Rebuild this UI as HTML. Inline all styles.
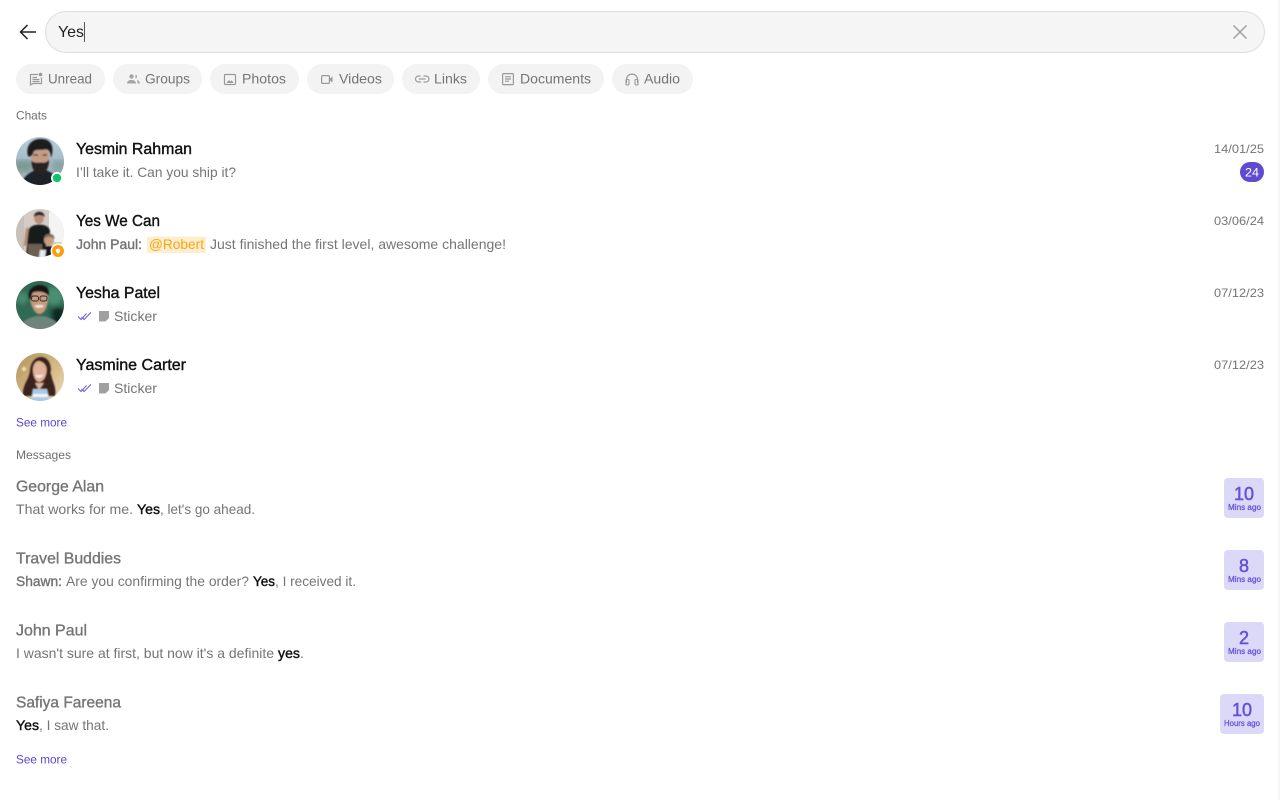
<!DOCTYPE html>
<html lang="en"><head><meta charset="utf-8"><title>Search</title>
<style>
html,body{margin:0;padding:0;background:#fff;width:1280px;height:800px;overflow:hidden}
svg{display:block;position:absolute;left:0;top:0}
text{font-family:"Liberation Sans",sans-serif;font-size:14px;fill:#757575}
.chip{fill:#757575}
.lab{font-size:12px;fill:#6f6f6f}
.name{font-size:16px;fill:#111;stroke:#111;stroke-width:.4}
.gname{font-size:16px;fill:#757575;stroke:#757575;stroke-width:.35}
.med{stroke:#757575;stroke-width:.4}
.hit{fill:#111;stroke:#111;stroke-width:.4}
.date{font-size:12px;fill:#757575}
.link{font-size:12px;fill:#5b45d6}
.num{font-size:18px;fill:#6450d8;stroke:#6450d8;stroke-width:.5;text-anchor:middle}
.ago{font-size:8px;fill:#6450d8;stroke:#6450d8;stroke-width:.25}
.ic{fill:none;stroke:#9a9a9a;stroke-width:1.2}
</style></head><body>
<svg width="1280" height="800" viewBox="0 0 1280 800" xmlns="http://www.w3.org/2000/svg">
<defs>
<clipPath id="a1"><circle cx="40" cy="161" r="24"/></clipPath>
<clipPath id="a2"><circle cx="40" cy="233" r="24"/></clipPath>
<clipPath id="a3"><circle cx="40" cy="305" r="24"/></clipPath>
<clipPath id="a4"><circle cx="40" cy="377" r="24"/></clipPath>
<linearGradient id="g1" x1="0" y1="0" x2="0" y2="1"><stop offset="0" stop-color="#b7ccdb"/><stop offset="1" stop-color="#95aeb2"/></linearGradient>
<linearGradient id="g4" x1="0" y1="0" x2="1" y2="1"><stop offset="0" stop-color="#b0935c"/><stop offset=".6" stop-color="#d8bd8a"/><stop offset="1" stop-color="#eadbbd"/></linearGradient>
<filter id="b"><feGaussianBlur stdDeviation=".7"/></filter>
<filter id="b2"><feGaussianBlur stdDeviation="2.500"/></filter>
</defs>
<rect x="1278" y="0" width="2" height="800" fill="#f7f7f7"/>

<!-- back arrow -->
<path d="M36 32H21M27.500 25L20.500 32L27.500 39" fill="none" stroke="#222" stroke-width="1.500"/>
<!-- search box -->
<rect x="45.500" y="11.500" width="1219" height="41" rx="20.500" fill="#f5f5f5" stroke="#dedede"/>
<text x="58" y="37" style="font-size:16px;fill:#222" textLength="26" lengthAdjust="spacingAndGlyphs">Yes</text>
<rect x="84" y="22" width="1" height="20" fill="#555"/>
<path d="M1233.500 25.500L1246.500 38.500M1246.500 25.500L1233.500 38.500" stroke="#a0a0a0" stroke-width="1.500" fill="none"/>

<!-- chips -->
<g fill="#f3f3f3">
<rect x="16" y="64" width="89" height="30" rx="15"/>
<rect x="113" y="64" width="89" height="30" rx="15"/>
<rect x="210" y="64" width="89" height="30" rx="15"/>
<rect x="307" y="64" width="87" height="30" rx="15"/>
<rect x="402" y="64" width="78" height="30" rx="15"/>
<rect x="488" y="64" width="116" height="30" rx="15"/>
<rect x="612" y="64" width="81" height="30" rx="15"/>
</g>
<text class="chip" x="48" y="83.500" textLength="44" lengthAdjust="spacingAndGlyphs">Unread</text>
<text class="chip" x="145" y="83.500" textLength="45" lengthAdjust="spacingAndGlyphs">Groups</text>
<text class="chip" x="242" y="83.500" textLength="44" lengthAdjust="spacingAndGlyphs">Photos</text>
<text class="chip" x="339" y="83.500" textLength="43" lengthAdjust="spacingAndGlyphs">Videos</text>
<text class="chip" x="434" y="83.500" textLength="33" lengthAdjust="spacingAndGlyphs">Links</text>
<text class="chip" x="520" y="83.500" textLength="71" lengthAdjust="spacingAndGlyphs">Documents</text>
<text class="chip" x="644" y="83.500" textLength="36" lengthAdjust="spacingAndGlyphs">Audio</text>
<!-- chip icons -->
<path class="ic" d="M38 74.500H30.500V85L33 83.500H41.500V77.500M32.500 77.500H37M32.500 79.500H39.500M32.500 81.500H39.500"/>
<circle cx="40.500" cy="74.500" r="1.800" fill="#9a9a9a"/>
<g fill="#a5a5a5">
<circle cx="131.500" cy="76.500" r="2.200"/><path d="M127 83.500C127 80.800 129.500 80 131.500 80S136 80.800 136 83.500Z"/>
<path d="M135.500 74.500C137.500 75 137.500 78 135.500 78.800ZM137 80C139 80.500 139.800 81.800 139.800 83.500H137.500C137.500 82 137.300 81 137 80Z"/>
</g>
<rect class="ic" x="224.500" y="74.500" width="11" height="10" rx="1"/>
<path d="M226.500 83L229 80L230.500 81.500L231.800 80.200L233.500 83Z" fill="#9a9a9a"/>
<rect class="ic" x="321.600" y="75.600" width="7.800" height="7.800" rx="1"/>
<path d="M330 78.500L332.500 76.500V82.500L330 80.500Z" fill="#9a9a9a"/>
<path class="ic" d="M420.500 76H418.500A3 3 0 0 0 418.500 82H421M423.500 76H426A3 3 0 0 1 426 82H423.500M419 79H425.500"/>
<rect class="ic" x="502.600" y="73.600" width="10.800" height="11" rx="1"/>
<path class="ic" d="M505 76.800H511M505 79H511M505 81.200H509"/>
<path class="ic" d="M626.500 83V79.500A5.500 5.500 0 0 1 637.500 79.500V83"/>
<rect x="626" y="79.500" width="3" height="5.500" rx="1" fill="none" stroke="#9a9a9a" stroke-width="1.100"/>
<rect x="635" y="79.500" width="3" height="5.500" rx="1" fill="none" stroke="#9a9a9a" stroke-width="1.100"/>

<!-- chats -->
<text class="lab" x="16" y="119.500" textLength="31" lengthAdjust="spacingAndGlyphs">Chats</text>

<!-- avatar 1 -->
<g clip-path="url(#a1)">
<rect x="16" y="137" width="48" height="48" fill="url(#g1)"/>
<g filter="url(#b2)"><rect x="14" y="160" width="18" height="12" fill="#7f9a94"/><rect x="52" y="160" width="14" height="12" fill="#88a5a6"/></g>
<g filter="url(#b)">
<path d="M21 187C22 176 30 173 35 170H46C52 173 59 176 61 187Z" fill="#1c2327"/>
<path d="M31 156C31 148 35 146 40 146S49 148 49 156C49 165 45 172 40 172S31 165 31 156Z" fill="#c39c86"/>
<path d="M28 156C25 145 33 138 42 139C51 139 55 147 51 158C50.500 152 49 149 45 149.500C39 150.500 35 149 33.500 152C33 155 30 158 28 156Z" fill="#1b1a1c"/>
<path d="M31.500 160C33 163.500 37 162.500 40 162.500S47 163.500 49 159C49.500 167 46 174 40 174S31 167 31.500 160Z" fill="#2a2123"/>
<path d="M33.500 155H38M42.500 155H47" stroke="#3a2e2e" stroke-width="1.200"/>
</g>
</g>
<circle cx="57" cy="178" r="6" fill="#fff"/><circle cx="57" cy="178" r="4.200" fill="#10c469"/>
<text class="name" x="76" y="154" textLength="116" lengthAdjust="spacingAndGlyphs">Yesmin Rahman</text>
<text x="76" y="177" textLength="160" lengthAdjust="spacingAndGlyphs">I’ll take it. Can you ship it?</text>
<text class="date" x="1214" y="153" textLength="50" lengthAdjust="spacingAndGlyphs">14/01/25</text>
<rect x="1240" y="162" width="24" height="20" rx="10" fill="#5f4bd2"/>
<text x="1252" y="176.500" text-anchor="middle" style="font-size:12px;fill:#fff" textLength="14" lengthAdjust="spacingAndGlyphs">24</text>

<!-- avatar 2 -->
<g clip-path="url(#a2)">
<rect x="16" y="209" width="48" height="48" fill="#d4ccc5"/>
<rect x="49" y="212" width="15" height="30" fill="#f4f4f5"/>
<rect x="16" y="209" width="8" height="48" fill="#c7bfb8"/>
<g filter="url(#b)">
<path d="M26 258L28 232C29 226 34 225 39 224.500C45 225 49 226 50 231L50 241L36 258Z" fill="#171a1f"/>
<path d="M28 244H42L43 258H28Z" fill="#6e5f53"/>
<path d="M27.500 228L25 246" stroke="#b58c76" stroke-width="3"/>
<ellipse cx="39" cy="218" rx="4.800" ry="6" fill="#b78f78"/>
<path d="M34 217C33.500 210 45 210 44.500 217C42 214.500 37 214.500 34 217Z" fill="#2b2421"/>
<ellipse cx="49" cy="240" rx="5" ry="5.500" fill="#c79c84"/>
<path d="M44 239C43.500 232 55 232 54.500 239C51 236 47 236 44 239Z" fill="#7f6a50"/>
<path d="M41 258C41 249 44 246 49 246S60 249 60 258Z" fill="#15171b"/>
<path d="M40 250H46L45 258H39Z" fill="#e9e9ea"/>
</g>
</g>
<circle cx="58" cy="251" r="7.500" fill="#fff"/><circle cx="58" cy="251" r="6" fill="#fb9e0b"/><path d="M55.800 249.500L58 248.500L60.200 249.500C60.200 251.500 59.500 253 58 253.800C56.500 253 55.800 251.500 55.800 249.500Z" fill="#fff"/>
<text class="name" x="76" y="226" textLength="84" lengthAdjust="spacingAndGlyphs">Yes We Can</text>
<text class="med" x="76" y="249" textLength="66" lengthAdjust="spacingAndGlyphs">John Paul:</text>
<rect x="147" y="236.500" width="59" height="16.500" rx="2" fill="#fdeecf"/>
<text x="149" y="249" style="fill:#fba50f" textLength="55" lengthAdjust="spacingAndGlyphs">@Robert</text>
<text x="210" y="249" textLength="296" lengthAdjust="spacingAndGlyphs">Just finished the first level, awesome challenge!</text>
<text class="date" x="1214" y="225" textLength="50" lengthAdjust="spacingAndGlyphs">03/06/24</text>

<!-- avatar 3 -->
<g clip-path="url(#a3)">
<rect x="16" y="281" width="48" height="48" fill="#2f6a53"/>
<g filter="url(#b2)"><circle cx="54" cy="296" r="9" fill="#4b8f73"/><circle cx="22" cy="298" r="6" fill="#4c8a70"/><rect x="52" y="308" width="12" height="21" fill="#0d2820"/></g>
<g filter="url(#b)">
<path d="M19 332C20 320 29 318 37 316H43C50 318 60 320 61 332Z" fill="#6f837d"/>
<path d="M30 298C30 291 34 288 39.500 288S48 292 48 299C47.500 308 44 314 39.500 314S30.500 306 30 298Z" fill="#c79a7d"/>
<path d="M29 298C27 290 33 285 40 285C47 285 50 290 48.500 296C45 291 37 291 33 292.500C31.500 294 32 297 31 300Z" fill="#191919"/>
<path d="M34.500 306C36 308.500 42.500 308.500 44 305.500L42 305H36Z" fill="#f0e7de"/>
</g>
<rect x="31.500" y="296" width="7" height="5" rx="2" fill="none" stroke="#2b2b2b" stroke-width=".9"/>
<rect x="40" y="296" width="7" height="5" rx="2" fill="none" stroke="#2b2b2b" stroke-width=".9"/>
</g>
<text class="name" x="76" y="298" textLength="84" lengthAdjust="spacingAndGlyphs">Yesha Patel</text>
<path d="M78 316.500L81 319.500L86.500 313.500M81.500 317L84 319.500L91 312.500" fill="none" stroke="#6a57de" stroke-width="1"/>
<path d="M99 311H109V318L105.500 321.500H99Z" fill="#a0a0a0"/>
<text x="114" y="321" textLength="43" lengthAdjust="spacingAndGlyphs">Sticker</text>
<text class="date" x="1214" y="297" textLength="50" lengthAdjust="spacingAndGlyphs">07/12/23</text>

<!-- avatar 4 -->
<g clip-path="url(#a4)">
<rect x="16" y="353" width="48" height="48" fill="url(#g4)"/>
<g filter="url(#b)">
<circle cx="24" cy="369" r="2" fill="#f2e0a6"/><circle cx="50" cy="373" r="2" fill="#f1deae"/>
<path d="M23 396C22 384 29 381 30 370C31 361 36 357 41 357S51 361 51 371C51 382 57 385 55 396Z" fill="#3b241c"/>
<path d="M33 370C33 364 36 361 39 361C44 362 47.500 366 46.500 372C45.500 379 42 382 39 382S33 376 33 370Z" fill="#e2b29a"/>
<path d="M35 375.500C37 378.500 41 378.500 44 374.500L40 375Z" fill="#f7eee8"/>
<path d="M31 403L33 389H47L50 403Z" fill="#a9cbe4"/>
<path d="M33 394H48V397H32Z" fill="#f4f4f4"/>
<path d="M35 383L39 390L44 383Z" fill="#e2b29a"/>
</g>
</g>
<text class="name" x="76" y="370" textLength="110" lengthAdjust="spacingAndGlyphs">Yasmine Carter</text>
<path d="M78 388.500L81 391.500L86.500 385.500M81.500 389L84 391.500L91 384.500" fill="none" stroke="#6a57de" stroke-width="1"/>
<path d="M99 383H109V390L105.500 393.500H99Z" fill="#a0a0a0"/>
<text x="114" y="393" textLength="43" lengthAdjust="spacingAndGlyphs">Sticker</text>
<text class="date" x="1214" y="369" textLength="50" lengthAdjust="spacingAndGlyphs">07/12/23</text>

<text class="link" x="16" y="426.500" textLength="51" lengthAdjust="spacingAndGlyphs">See more</text>
<text class="lab" x="16" y="459" textLength="55" lengthAdjust="spacingAndGlyphs">Messages</text>

<!-- messages -->
<text class="gname" x="16" y="491.500" textLength="88" lengthAdjust="spacingAndGlyphs">George Alan</text>
<text x="16" y="514" textLength="117" lengthAdjust="spacingAndGlyphs">That works for me.</text>
<text class="hit" x="137" y="514" textLength="23" lengthAdjust="spacingAndGlyphs">Yes</text>
<text x="160" y="514" textLength="95" lengthAdjust="spacingAndGlyphs">, let's go ahead.</text>
<rect x="1224" y="478" width="40" height="40" rx="4" fill="#dcd8f8"/>
<text class="num" x="1244" y="500">10</text>
<text class="ago" x="1228" y="510" textLength="33" lengthAdjust="spacingAndGlyphs">Mins ago</text>

<text class="gname" x="16" y="563.500" textLength="105" lengthAdjust="spacingAndGlyphs">Travel Buddies</text>
<text class="med" x="16" y="586" textLength="46" lengthAdjust="spacingAndGlyphs">Shawn:</text>
<text x="66" y="586" textLength="183" lengthAdjust="spacingAndGlyphs">Are you confirming the order?</text>
<text class="hit" x="253" y="586" textLength="22" lengthAdjust="spacingAndGlyphs">Yes</text>
<text x="275" y="586" textLength="81" lengthAdjust="spacingAndGlyphs">, I received it.</text>
<rect x="1224" y="550" width="40" height="40" rx="4" fill="#dcd8f8"/>
<text class="num" x="1244" y="572">8</text>
<text class="ago" x="1228" y="582" textLength="33" lengthAdjust="spacingAndGlyphs">Mins ago</text>

<text class="gname" x="16" y="635.500" textLength="71" lengthAdjust="spacingAndGlyphs">John Paul</text>
<text x="16" y="658" textLength="258" lengthAdjust="spacingAndGlyphs">I wasn't sure at first, but now it's a definite</text>
<text class="hit" x="278" y="658" textLength="22" lengthAdjust="spacingAndGlyphs">yes</text>
<text x="300" y="658">.</text>
<rect x="1224" y="622" width="40" height="40" rx="4" fill="#dcd8f8"/>
<text class="num" x="1244" y="644">2</text>
<text class="ago" x="1228" y="654" textLength="33" lengthAdjust="spacingAndGlyphs">Mins ago</text>

<text class="gname" x="16" y="707.500" textLength="105" lengthAdjust="spacingAndGlyphs">Safiya Fareena</text>
<text class="hit" x="16" y="730" textLength="23" lengthAdjust="spacingAndGlyphs">Yes</text>
<text x="39" y="730" textLength="70" lengthAdjust="spacingAndGlyphs">, I saw that.</text>
<rect x="1220" y="694" width="44" height="40" rx="4" fill="#dcd8f8"/>
<text class="num" x="1242" y="716">10</text>
<text class="ago" x="1224" y="726" textLength="36" lengthAdjust="spacingAndGlyphs">Hours ago</text>

<text class="link" x="16" y="763.500" textLength="51" lengthAdjust="spacingAndGlyphs">See more</text>
</svg>
</body></html>
